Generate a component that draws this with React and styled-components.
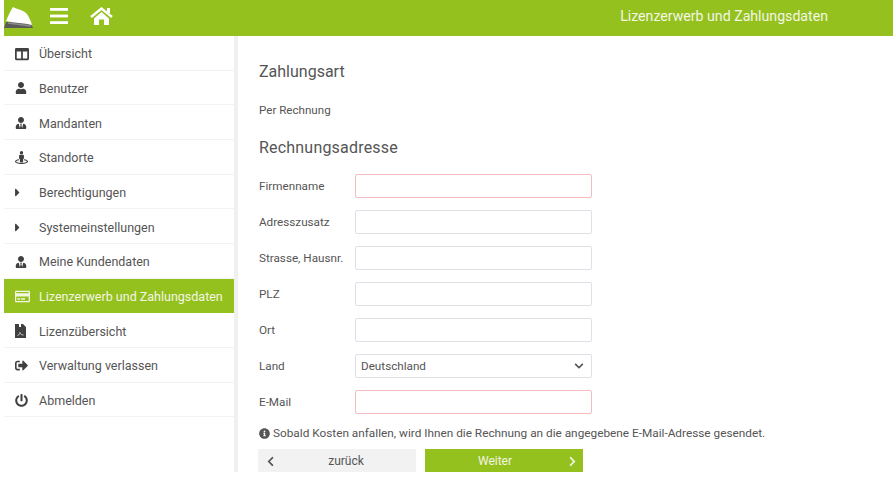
import React from 'react';
import styled, { createGlobalStyle } from 'styled-components';
import { FaCaretRight, FaChevronDown, FaChevronLeft, FaChevronRight, FaColumns, FaInfoCircle, FaPowerOff, FaRegCreditCard, FaSignOutAlt, FaStreetView, FaUser, FaUserTie } from 'react-icons/fa';

const GlobalStyle = createGlobalStyle`
  html, body {
    margin: 0;
    padding: 0;
    height: 482px;
    overflow: hidden;
    background: #fff;
    font-family: Roboto, "Liberation Sans", sans-serif;
    color: #555;
  }
  * { box-sizing: border-box; }
`;

const LicenseIcon = () => (
  <svg width="11" height="14" viewBox="0 0 11 14">
    <path d="M0 0 H4 V3 H6 V0 H8 L11 3 V14 H0 Z" fill="currentColor" />
    <path d="M2.5 11.5 C4 11.5 4.5 9.5 5 8.5 C5.5 10 6.5 11 8.5 11" stroke="#ddd" strokeWidth="0.9" fill="none" />
  </svg>
);

const menu = [
  { label: 'Übersicht', icon: <FaColumns size={14} /> },
  { label: 'Benutzer', icon: <FaUser size={12} /> },
  { label: 'Mandanten', icon: <FaUserTie size={12} /> },
  { label: 'Standorte', icon: <FaStreetView size={13} /> },
  { label: 'Berechtigungen', icon: <CaretIcon size={13} /> },
  { label: 'Systemeinstellungen', icon: <CaretIcon size={13} /> },
  { label: 'Meine Kundendaten', icon: <FaUserTie size={12} /> },
  { label: 'Lizenzerwerb und Zahlungsdaten', icon: <FaRegCreditCard size={15} />, active: true },
  { label: 'Lizenzübersicht', icon: <LicenseIcon /> },
  { label: 'Verwaltung verlassen', icon: <FaSignOutAlt size={13} /> },
  { label: 'Abmelden', icon: <FaPowerOff size={13} /> },
];

const fields = [
  { label: 'Firmenname', required: true },
  { label: 'Adresszusatz' },
  { label: 'Strasse, Hausnr.' },
  { label: 'PLZ' },
  { label: 'Ort' },
  { label: 'Land', select: true },
  { label: 'E-Mail', required: true },
];

export default function App() {
  return (
    <Page>
      <GlobalStyle />
      <Header>
        <HeaderLeft>
          <Logo viewBox="0 0 30 24">
            <path d="M0 23 L2 17 L26 17 L29 23 Z" fill="#5a5a5a" />
            <path d="M4 18 L27 21" stroke="#8c8c8c" strokeWidth="1.5" fill="none" />
            <path d="M2 16 C4 11 6 7 9 2 C12 4 20 5 23 9 C25 12 27 16 28 20 C20 18 10 18 2 16 Z" fill="#fff" />
          </Logo>
          <BarsIcon viewBox="0 0 18 16">
            <rect x="0" y="0" width="18" height="2.8" />
            <rect x="0" y="6.6" width="18" height="2.8" />
            <rect x="0" y="13.2" width="18" height="2.8" />
          </BarsIcon>
          <HomeIcon viewBox="0 0 23 18">
            <path d="M1 10 L11.5 1.5 L22 10" fill="none" stroke="#fff" strokeWidth="2.4" />
            <rect x="17" y="1" width="3" height="5" fill="#fff" />
            <path d="M4 11.5 L11.5 5 L19 11.5 V18 H14 V12.5 H9 V18 H4 Z" fill="#fff" />
          </HomeIcon>
        </HeaderLeft>
        <HeaderTitle>Lizenzerwerb und Zahlungsdaten</HeaderTitle>
      </Header>
      <Body>
        <Sidebar>
          {menu.map((item) => (
            <MenuRow key={item.label} $active={item.active}>
              <MenuIcon $active={item.active}>{item.icon}</MenuIcon>
              {item.label}
            </MenuRow>
          ))}
        </Sidebar>
        <Content>
          <SectionTitle>Zahlungsart</SectionTitle>
          <PlainText>Per Rechnung</PlainText>
          <AddressTitle>Rechnungsadresse</AddressTitle>
          <Form>
            {fields.map((field) => (
              <FieldRow key={field.label}>
                <FieldLabel>{field.label}</FieldLabel>
                {field.select ? (
                  <SelectWrap>
                    <Select defaultValue="Deutschland">
                      <option>Deutschland</option>
                    </Select>
                    <SelectArrow><FaChevronDown size={10} /></SelectArrow>
                  </SelectWrap>
                ) : (
                  <Input $required={field.required} />
                )}
              </FieldRow>
            ))}
          </Form>
          <Hint>
            <FaInfoCircle size={11} />
            Sobald Kosten anfallen, wird Ihnen die Rechnung an die angegebene E-Mail-Adresse gesendet.
          </Hint>
          <Buttons>
            <BackButton>
              <FaChevronLeft size={11} />
              <span>zurück</span>
            </BackButton>
            <NextButton>
              <span>Weiter</span>
              <FaChevronRight size={11} />
            </NextButton>
          </Buttons>
        </Content>
      </Body>
    </Page>
  );
}

function CaretIcon({ size }) {
  return <CaretBox><FaCaretRight size={size} /></CaretBox>;
}

const CaretBox = styled.span`
  display: flex;
  margin-left: -4px;
`;

const Page = styled.div`
  height: 472px;
  padding-left: 4px;
  overflow: hidden;
`;

const Header = styled.header`
  height: 36px;
  background: #95c11f;
  display: flex;
  align-items: center;
  justify-content: space-between;
  padding-right: 65px;
`;

const HeaderLeft = styled.div`
  display: flex;
  align-items: center;
`;

const Logo = styled.svg`
  width: 30px;
  height: 24px;
  margin-top: -2px;
`;

const BarsIcon = styled.svg`
  width: 18px;
  height: 16px;
  margin: -4px 0 0 16px;
  fill: #fff;
`;

const HomeIcon = styled.svg`
  width: 23px;
  height: 18px;
  margin: -4px 0 0 22px;
`;

const HeaderTitle = styled.div`
  color: #f2f6e2;
  font-size: 14.15px;
  margin-top: -5px;
`;

const Body = styled.div`
  display: flex;
  height: 436px;
`;

const Sidebar = styled.nav`
  width: 234px;
  flex-shrink: 0;
  border-right: 4px solid #f0f0f0;
`;

const MenuRow = styled.div`
  height: 34.66px;
  display: flex;
  align-items: center;
  padding: 2px 0 0 11px;
  font-size: 12.5px;
  border-bottom: 1px solid ${(props) => (props.$active ? '#95c11f' : '#f3f3f3')};
  background: ${(props) => (props.$active ? '#95c11f' : '#fff')};
  color: ${(props) => (props.$active ? '#f2f6e2' : '#555')};
  white-space: nowrap;
`;

const MenuIcon = styled.span`
  width: 24px;
  flex-shrink: 0;
  display: flex;
  justify-content: flex-start;
  color: ${(props) => (props.$active ? '#f2f6e2' : '#404040')};
`;

const Content = styled.main`
  padding: 27px 0 0 21px;
  flex: 1;
`;

const SectionTitle = styled.h2`
  margin: 0;
  font-size: 16px;
  font-weight: 400;
  line-height: 18px;
  color: #555;
`;

const AddressTitle = styled(SectionTitle)`
  margin-top: 22px;
  letter-spacing: 0.2px;
`;

const PlainText = styled.p`
  margin: 22px 0 0;
  font-size: 11.6px;
  line-height: 14px;
`;

const Form = styled.div`
  display: flex;
  flex-direction: column;
  gap: 12px;
  margin-top: 17px;
`;

const FieldRow = styled.div`
  display: flex;
  align-items: center;
  height: 24px;
`;

const FieldLabel = styled.label`
  width: 96px;
  font-size: 11.7px;
  flex-shrink: 0;
`;

const Input = styled.input`
  width: 237px;
  height: 24px;
  background: #fff;
  border: 1px solid ${(props) => (props.$required ? '#f4bcbc' : '#dde1e6')};
  border-radius: 2px;
  outline: none;
`;

const SelectWrap = styled.div`
  position: relative;
  width: 237px;
  height: 24px;
`;

const Select = styled.select`
  width: 100%;
  height: 100%;
  appearance: none;
  background: #fff;
  border: 1px solid #dde1e6;
  border-radius: 2px;
  padding: 0 5px;
  font-family: inherit;
  font-size: 11.7px;
  color: #555;
  outline: none;
`;

const SelectArrow = styled.span`
  position: absolute;
  right: 8px;
  top: 7px;
  display: flex;
  color: #555;
  pointer-events: none;
`;

const Hint = styled.div`
  display: flex;
  align-items: center;
  gap: 3px;
  margin-top: 12px;
  font-size: 11.8px;
  line-height: 14px;
  white-space: nowrap;
`;

const Buttons = styled.div`
  display: flex;
  gap: 9px;
  margin-top: 9px;
  margin-left: -1px;
`;

const BackButton = styled.button`
  width: 158px;
  height: 24px;
  display: flex;
  align-items: center;
  padding: 0 7px;
  border: none;
  background: #f2f2f2;
  color: #555;
  font-family: inherit;
  font-size: 12px;

  span {
    flex: 1;
    padding-left: 7px;
    text-align: center;
  }
`;

const NextButton = styled(BackButton)`
  background: #95c11f;
  color: #f2f6e2;
  padding: 0 5px;

  span {
    padding: 0 7px 0 0;
  }
`;
